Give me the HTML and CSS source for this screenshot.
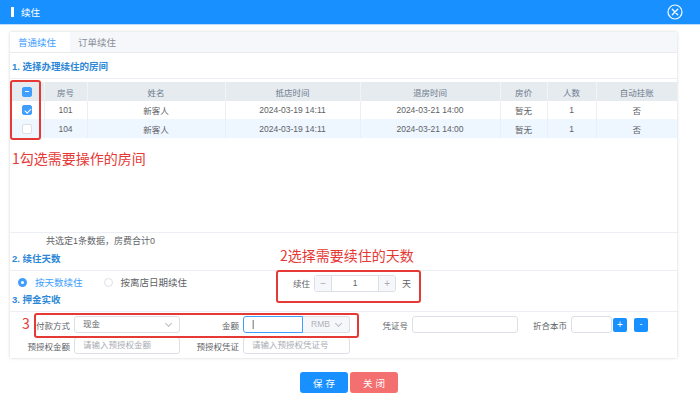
FILE: index.html
```html
<!DOCTYPE html>
<html lang="zh-CN">
<head>
  <meta charset="UTF-8">
  <meta name="viewport" content="width=device-width, initial-scale=1.0">
  <title>续住</title>
  <link rel="stylesheet" href="styles.css">
</head>
<body>

  <div class="dialog-header">
    <span class="title-bar"></span>
    <span class="dialog-title">续住</span>
    <svg class="close-icon" width="16" height="16" viewBox="0 0 16 16">
      <circle cx="8" cy="8" r="7" fill="none" stroke="#fff" stroke-width="1.2"/>
      <path d="M5.3 5.3 L10.7 10.7 M10.7 5.3 L5.3 10.7" stroke="#fff" stroke-width="1.3" stroke-linecap="round"/>
    </svg>
  </div>

  <div class="dialog-body">
    <div class="panel">
      <div class="tabs">
        <div class="tab active">普通续住</div>
        <div class="tab">订单续住</div>
      </div>

      <div class="sec-title first">1. 选择办理续住的房间</div>

      <div class="table-wrap">
        <table class="room-table">
          <colgroup>
            <col style="width:33px"><col style="width:43px"><col style="width:138px"><col style="width:135px">
            <col style="width:140px"><col style="width:47px"><col style="width:49px"><col style="width:81px">
          </colgroup>
          <thead>
            <tr>
              <th><span class="check half"></span></th>
              <th>房号</th>
              <th>姓名</th>
              <th>抵店时间</th>
              <th>退房时间</th>
              <th>房价</th>
              <th>人数</th>
              <th>自动挂账</th>
            </tr>
          </thead>
          <tbody>
            <tr>
              <td><span class="check on"></span></td>
              <td>101</td>
              <td>新客人</td>
              <td>2024-03-19 14:11</td>
              <td>2024-03-21 14:00</td>
              <td>暂无</td>
              <td>1</td>
              <td>否</td>
            </tr>
            <tr class="striped">
              <td><span class="check"></span></td>
              <td>104</td>
              <td>新客人</td>
              <td>2024-03-19 14:11</td>
              <td>2024-03-21 14:00</td>
              <td>暂无</td>
              <td>1</td>
              <td>否</td>
            </tr>
          </tbody>
        </table>
      </div>
      <div class="table-footer">共选定1条数据，房费合计0</div>

      <div class="sec-title">2. 续住天数</div>
      <div class="days-row">
        <label class="radio checked"><span class="radio-dot"></span>按天数续住</label>
        <label class="radio"><span class="radio-dot"></span>按离店日期续住</label>
        <div class="stepper-group">
          <span class="field-label">续住</span>
          <div class="stepper">
            <span class="step-btn">−</span>
            <span class="step-value">1</span>
            <span class="step-btn">+</span>
          </div>
          <span class="unit">天</span>
        </div>
      </div>

      <div class="sec-title">3. 押金实收</div>
      <div class="form">
        <div class="form-row">
          <div class="fitem">
            <span class="flabel w60">付款方式</span>
            <div class="input select w106">现金<span class="chev"></span></div>
          </div>
          <div class="fitem">
            <span class="flabel w59">金额</span>
            <div class="input focus w60"><span class="caret">|</span></div>
            <div class="input select disabled w47">RMB<span class="chev"></span></div>
          </div>
          <div class="fitem">
            <span class="flabel w57">凭证号</span>
            <div class="input w106"></div>
          </div>
          <div class="fitem">
            <span class="flabel w49">折合本币</span>
            <div class="input w41"></div>
            <span class="mini-btn plus">+</span>
            <span class="mini-btn minus">-</span>
          </div>
        </div>
        <div class="form-row">
          <div class="fitem">
            <span class="flabel w60">预授权金额</span>
            <div class="input placeholder w106">请输入预授权金额</div>
          </div>
          <div class="fitem">
            <span class="flabel w59">预授权凭证</span>
            <div class="input placeholder w107">请输入预授权凭证号</div>
          </div>
        </div>
      </div>
    </div>

    <div class="actions">
      <button class="btn save">保存</button>
      <button class="btn close">关闭</button>
    </div>
  </div>

  <!-- annotations drawn over the screenshot -->
  <div class="mark box1"></div>
  <div class="note note1">1勾选需要操作的房间</div>
  <div class="note note2">2选择需要续住的天数</div>
  <div class="mark box2"></div>
  <div class="note note3">3</div>
  <div class="mark box3"></div>

</body>
</html>
```

FILE: styles.css
```css
body {
  margin: 0;
  width: 700px;
  height: 399px;
  overflow: hidden;
  position: relative;
  font-family: "Liberation Sans", "Noto Sans CJK SC", sans-serif;
  color: #606266;
  background: #fff;
}

.dialog-header {
  height: 24px;
  background: #1890ff;
  border-bottom: 1px solid #bcdcfb;
  display: flex;
  align-items: center;
  padding-left: 11px;
}

.title-bar {
  width: 3px;
  height: 10px;
  background: #fff;
  margin-right: 7px;
}

.dialog-title {
  color: #fff;
  font-size: 9.5px;
}

.close-icon {
  margin-left: auto;
  margin-right: 17px;
}

.dialog-body {
  padding-top: 7px;
}

.panel {
  margin-left: 10px;
  width: 667px;
  height: 326px;
  box-sizing: border-box;
  box-shadow: 0 0 3px rgba(0, 0, 0, 0.18);
}

.tabs {
  display: flex;
  height: 21px;
  background: #f5f7fa;
  border-bottom: 1px solid #e8eaee;
  box-sizing: border-box;
}

.tab {
  padding: 0 14px 0 8px;
  line-height: 21px;
  font-size: 9.5px;
  color: #8a8f99;
}

.tab.active {
  background: #fff;
  color: #409eff;
  width: 38px;
}

.sec-title {
  padding: 0 0 4px 2px;
  line-height: 14px;
  font-size: 9.5px;
  font-weight: bold;
  color: #2d87d6;
  border-bottom: 1px solid #ebeef5;
}

.sec-title.first {
  margin-top: 7px;
}

.table-wrap {
  margin-top: 3px;
  margin-left: 1px;
  height: 151px;
  box-sizing: border-box;
  border-bottom: 1px solid #ebeef5;
}

.room-table {
  border-collapse: collapse;
  table-layout: fixed;
  width: 666px;
  font-size: 8.5px;
  text-align: center;
}

.room-table th {
  height: 19px;
  padding: 0;
  background: #e6ebf0;
  color: #6d7b8c;
  font-weight: normal;
  border-right: 1px solid #f2f4f7;
}

.room-table td {
  height: 18px;
  padding: 0;
  color: #606266;
  border-right: 1px solid #ebeef5;
}

.room-table th:last-child,
.room-table td:last-child {
  border-right: none;
}

.room-table tr.striped td {
  background: #eef6ff;
  height: 19px;
}

.check {
  display: inline-block;
  width: 10px;
  height: 10px;
  box-sizing: border-box;
  border: 1px solid #dcdfe6;
  border-radius: 2px;
  background: #fff;
  vertical-align: middle;
  position: relative;
}

.check.on,
.check.half {
  background: #409eff;
  border-color: #409eff;
}

.check.on::after {
  content: "";
  position: absolute;
  left: 2.5px;
  top: 0.5px;
  width: 2.5px;
  height: 5px;
  border: solid #fff;
  border-width: 0 1.2px 1.2px 0;
  transform: rotate(45deg);
}

.check.half::after {
  content: "";
  position: absolute;
  left: 2px;
  top: 3.5px;
  width: 4px;
  height: 1px;
  background: #fff;
}

.table-footer {
  height: 19px;
  line-height: 17px;
  padding-left: 36px;
  font-size: 9px;
  color: #606266;
}

.days-row {
  height: 22px;
  display: flex;
  align-items: center;
  padding-left: 8px;
  font-size: 9.5px;
}

.radio {
  display: flex;
  align-items: center;
  color: #606266;
  margin-right: 21px;
}

.radio.checked {
  color: #409eff;
}

.radio-dot {
  width: 9px;
  height: 9px;
  box-sizing: border-box;
  border: 1px solid #dcdfe6;
  border-radius: 50%;
  margin-right: 8px;
  background: #fff;
}

.radio.checked .radio-dot {
  border: 3px solid #409eff;
}

.stepper-group {
  display: flex;
  align-items: center;
  margin-left: 85px;
  margin-top: 2px;
}

.field-label {
  font-size: 8.5px;
  color: #606266;
  margin-right: 4px;
}

.stepper {
  display: flex;
  width: 82px;
  height: 17px;
  box-sizing: border-box;
  border: 1px solid #dcdfe6;
  border-radius: 3px;
  overflow: hidden;
}

.step-btn {
  width: 16px;
  background: #f5f7fa;
  color: #a8abb2;
  text-align: center;
  line-height: 15px;
  font-size: 10px;
}

.step-btn:first-child {
  border-right: 1px solid #dcdfe6;
}

.step-btn:last-child {
  border-left: 1px solid #dcdfe6;
}

.step-value {
  flex: 1;
  text-align: center;
  line-height: 15px;
  font-size: 8.5px;
  color: #606266;
}

.unit {
  margin-left: 6px;
  font-size: 9px;
  color: #606266;
}

.form {
  padding-top: 4px;
}

.form-row {
  display: flex;
  height: 17px;
  margin-bottom: 4px;
}

.fitem {
  display: flex;
  align-items: center;
}

.flabel {
  text-align: right;
  padding-right: 4px;
  box-sizing: border-box;
  font-size: 8.5px;
  color: #606266;
}

.w60 { width: 64px; }
.w59 { width: 63px; }
.w57 { width: 62px; }
.w49 { width: 53px; }

.input {
  height: 17px;
  box-sizing: border-box;
  border: 1px solid #dcdfe6;
  border-radius: 3px;
  background: #fff;
  font-size: 8.5px;
  line-height: 15px;
  padding-left: 8px;
  color: #606266;
  position: relative;
}

.input.w106 { width: 106px; }
.input.w107 { width: 107px; }
.input.w60 { width: 60px; }
.input.w47 { width: 47px; }
.input.w41 { width: 41px; }

.input.placeholder {
  color: #a8abb2;
}

.input.focus {
  border-color: #409eff;
  border-radius: 3px 0 0 3px;
}

.caret {
  color: #303133;
}

.input.disabled {
  background: #f5f7fa;
  color: #b0b3b9;
  border-radius: 0 3px 3px 0;
  border-left: none;
}

.chev {
  position: absolute;
  right: 8px;
  top: 4px;
  width: 4px;
  height: 4px;
  border: solid #b8bcc4;
  border-width: 0 1px 1px 0;
  transform: rotate(45deg);
}

.mini-btn {
  width: 14px;
  height: 14px;
  border-radius: 2px;
  background: #1890ff;
  color: #fff;
  font-size: 10px;
  line-height: 13px;
  text-align: center;
  margin-left: 1px;
}

.mini-btn.minus {
  margin-left: 7px;
  font-size: 9px;
}

.actions {
  display: flex;
  justify-content: center;
  gap: 2px;
  margin-top: 14px;
  padding-right: 2px;
}

.btn {
  width: 48px;
  height: 21px;
  border: none;
  border-radius: 3px;
  color: #fff;
  font-family: "Noto Sans CJK SC", sans-serif;
  font-size: 9.5px;
  letter-spacing: 3px;
  padding: 0 0 0 3px;
}

.btn.save {
  background: #1890ff;
}

.btn.close {
  background: #f46f6f;
}

.mark {
  position: absolute;
  border: 2px solid #e53935;
  border-radius: 3px;
  box-sizing: border-box;
}

.box1 { left: 10px; top: 80px; width: 31px; height: 60px; }
.box2 { left: 276px; top: 270px; width: 145px; height: 33px; }
.box3 { left: 34px; top: 313px; width: 325px; height: 25px; }

.note {
  position: absolute;
  color: #e53935;
  font-family: "Noto Sans CJK SC", sans-serif;
  font-size: 14px;
  line-height: 16px;
}

.note1 { left: 12px; top: 150px; }
.note2 { left: 280px; top: 247px; }
.note3 { left: 22px; top: 315px; }
```
